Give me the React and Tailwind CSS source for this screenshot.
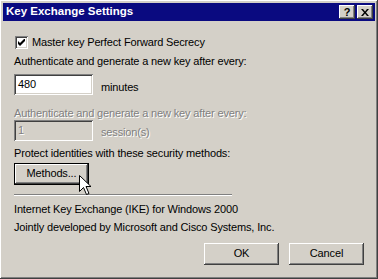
import React from "react";

const raised =
  "shadow-[inset_-1px_-1px_#404040,inset_1px_1px_#ffffff,inset_-2px_-2px_#808080,inset_2px_2px_#d4d0c8]";
const sunken =
  "shadow-[inset_1px_1px_#808080,inset_-1px_-1px_#ffffff,inset_2px_2px_#404040,inset_-2px_-2px_#d4d0c8]";

const Label = ({ children, disabled, className = "" }) => (
  <div
    className={`h-[13px] leading-[13px] whitespace-nowrap ${
      disabled ? "text-[#808080] [text-shadow:1px_1px_0_#ffffff]" : "text-black"
    } ${className}`}
  >
    {children}
  </div>
);

const Button = ({ children, focused, className = "" }) => (
  <div
    className={`relative flex h-[22px] w-[75px] items-center justify-center bg-[#d4d0c8] ${
      focused
        ? "shadow-[inset_0_0_0_1px_#000000,inset_-2px_-2px_#404040,inset_2px_2px_#ffffff,inset_-3px_-3px_#808080]"
        : raised
    } ${className}`}
  >
    {children}
  </div>
);

const Cursor = () => (
  <svg
    className="absolute left-[79px] top-[175px]"
    width="13"
    height="21"
    viewBox="0 0 13 21"
  >
    <path
      d="M0.5 0.5 L0.5 16.5 L4.5 12.5 L7.5 19.5 L10 18.5 L7 11.5 L12 11.5 Z"
      fill="#ffffff"
      stroke="#000000"
      strokeWidth="1"
      strokeLinejoin="miter"
    />
  </svg>
);

export default function App() {
  return (
    <div
      className={`relative h-[279px] w-[378px] bg-[#d4d0c8] p-[3px] text-[11px] ${raised}`}
      style={{ fontFamily: '"Liberation Sans", Arial, sans-serif' }}
    >
      {/* title bar */}
      <div className="flex h-[18px] items-center justify-between bg-[#0a0a80] pl-[3px] pr-[2px]">
        <span className="text-[11.5px] font-bold leading-none text-white">
          Key Exchange Settings
        </span>
        <div className="flex gap-[2px]">
          <div
            className={`flex h-[14px] w-[16px] items-center justify-center bg-[#d4d0c8] text-[11px] font-bold leading-none text-black ${raised}`}
          >
            ?
          </div>
          <div className={`flex h-[14px] w-[16px] items-center justify-center bg-[#d4d0c8] ${raised}`}>
            <svg width="8" height="7" viewBox="0 0 8 7">
              <path d="M0 0h2l2 2.5 2-2.5h2l-3 3.5 3 3.5h-2l-2-2.5-2 2.5h-2l3-3.5z" fill="#000" />
            </svg>
          </div>
        </div>
      </div>

      <div className="flex flex-col px-[11px] tracking-[-0.15px]">
        <div className="mt-[15px] flex h-[13px] items-center">
          <div className={`ml-[1px] flex h-[13px] w-[13px] items-center justify-center bg-white ${sunken}`}>
            <svg width="7" height="7" viewBox="0 0 7 7">
              <path d="M0 2v3l2 2 5-5V-1L2 4z" fill="#000" />
            </svg>
          </div>
          <Label className="ml-[4px]">Master key Perfect Forward Secrecy</Label>
        </div>

        <Label className="mt-[6px]">Authenticate and generate a new key after every:</Label>
        <div className="mt-[5px] flex items-center">
          <div className={`flex h-[21px] w-[79px] items-center bg-white px-[4px] ${sunken}`}>480</div>
          <span className="ml-[8px] mt-[6px]">minutes</span>
        </div>

        <Label disabled className="mt-[11px]">
          Authenticate and generate a new key after every:
        </Label>
        <div className="flex items-center">
          <div
            className={`flex h-[21px] w-[79px] items-center bg-[#d4d0c8] px-[4px] text-[#808080] [text-shadow:1px_1px_0_#ffffff] ${sunken}`}
          >
            1
          </div>
          <span className="ml-[8px] mt-[4px] text-[#808080] [text-shadow:1px_1px_0_#ffffff]">
            session(s)
          </span>
        </div>

        <Label className="mt-[6px]">Protect identities with these security methods:</Label>
        <Button focused className="mt-[3px] w-[74px] h-[21px]">
          Methods...
        </Button>

        <div className="mt-[9px] h-[2px] w-[218px] border-t border-b border-t-[#808080] border-b-white" />

        <Label className="mt-[7px]">Internet Key Exchange (IKE) for Windows 2000</Label>
        <Label className="mt-[5px]">Jointly developed by Microsoft and Cisco Systems, Inc.</Label>

        <div className="mt-[9px] flex justify-end gap-[10px] pr-[0px]">
          <Button>OK</Button>
          <Button>Cancel</Button>
        </div>
      </div>

      <Cursor />
    </div>
  );
}
